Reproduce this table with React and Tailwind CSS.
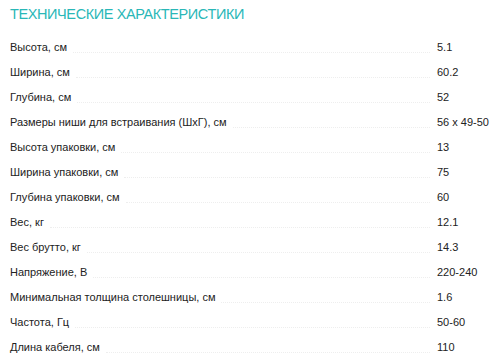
const specs = [
  ['Высота, см', '5.1'],
  ['Ширина, см', '60.2'],
  ['Глубина, см', '52'],
  ['Размеры ниши для встраивания (ШхГ), см', '56 x 49-50'],
  ['Высота упаковки, см', '13'],
  ['Ширина упаковки, см', '75'],
  ['Глубина упаковки, см', '60'],
  ['Вес, кг', '12.1'],
  ['Вес брутто, кг', '14.3'],
  ['Напряжение, В', '220-240'],
  ['Минимальная толщина столешницы, см', '1.6'],
  ['Частота, Гц', '50-60'],
  ['Длина кабеля, см', '110'],
]

export default function App() {
  return (
    <div className="w-[500px] h-[362px] overflow-hidden bg-white pl-[10px] pt-[5px] font-['Liberation_Sans',Arial,sans-serif]">
      <h2 className="text-[14.5px] leading-[18px] tracking-[-0.4px] text-[#2ab7b7] uppercase">Технические характеристики</h2>
      <div className="mt-[12px]">
        {specs.map(([label, value]) => (
          <div key={label} className="flex items-end h-[25px] text-[11px] leading-[13px] text-[#222]">
            <span className="pb-[6px]">{label}</span>
            <span className="flex-1 ml-[6px] mr-[7px] mb-[7px] border-b border-dotted border-[#eeeeee]" />
            <span className="w-[63px] shrink-0 pb-[6px]">{value}</span>
          </div>
        ))}
      </div>
    </div>
  )
}
